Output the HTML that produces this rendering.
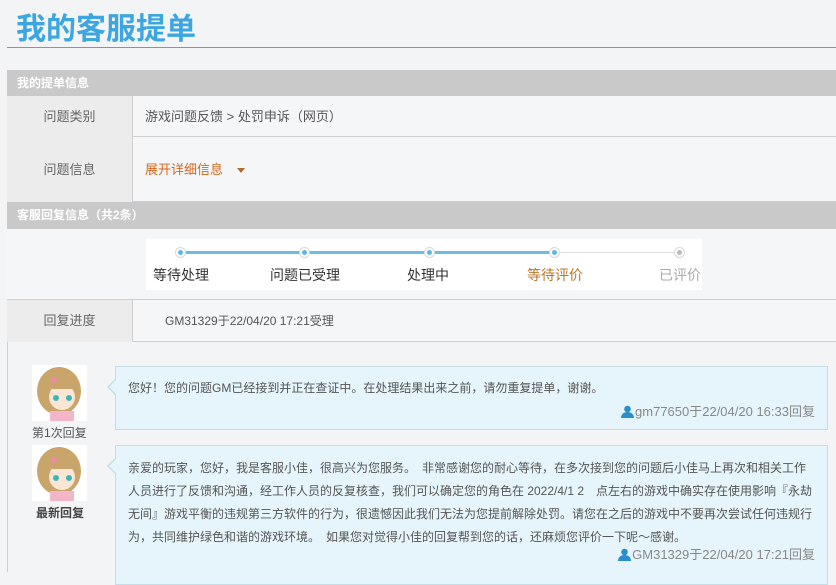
<!DOCTYPE html>
<html><head><meta charset="utf-8"><style>
*{margin:0;padding:0;box-sizing:border-box}
body{width:836px;height:572px;overflow:hidden;background:#f3f4f6;font-family:"Liberation Sans","Noto Sans CJK SC",sans-serif;position:relative;color:#555}
.abs{position:absolute}
h1{position:absolute;left:16px;top:4px;font-size:30px;color:#3da6e0;font-weight:bold;font-family:"Noto Sans CJK SC",sans-serif}
.line{left:7px;right:0;top:47px;height:1px;background:#4aa8dc}
.bar{left:7px;right:0;background:#c9c9c9;color:#fff;font-size:12px;font-weight:bold;padding-left:10px}
.lab{left:7px;width:126px;background:#ececec;border-right:1px solid #cfcfcf;text-align:center;font-size:13px;color:#666}
.row{left:7px;right:0;border-bottom:1px solid #cfcfcf;background:#f5f6f7}
.bub{left:115px;right:8px;border:1px solid #c6dde8;background:#e6f5fb}
.bub:before{content:"";position:absolute;left:-9px;top:12px;border:8px solid transparent;border-right-color:#c6dde8;border-left:0}
.bub:after{content:"";position:absolute;left:-7px;top:13px;border:7px solid transparent;border-right-color:#e6f5fb;border-left:0}
.av{left:32px;width:55px;height:56px;background:#fff}
.sig{right:12px;font-size:13px;color:#888}
.sig svg{vertical-align:-2px;margin-right:1px}
.st{font-size:14px;color:#333;top:265px}
.dot{width:11px;height:11px;border-radius:50%;background:#fff;border:1px solid #d8d8d8;top:247px}
.dot i{position:absolute;left:2px;top:2px;width:5px;height:5px;border-radius:50%;background:#5bb7ea}
</style></head><body>
<h1>我的客服提单</h1>
<div class="abs line"></div>
<div class="abs" style="left:7px;top:70px;width:1px;height:502px;background:#cfcfcf"></div>
<div class="abs bar" style="top:70px;height:26px;line-height:26px">我的提单信息</div>
<div class="abs row" style="top:96px;height:41px"></div>
<div class="abs lab" style="top:96px;height:41px;line-height:41px">问题类别</div>
<div class="abs" style="left:145px;top:96px;line-height:41px;font-size:13px;color:#555">游戏问题反馈 &gt; 处罚申诉（网页）</div>
<div class="abs row" style="top:137px;height:65px"></div>
<div class="abs lab" style="top:137px;height:65px;line-height:65px">问题信息</div>
<div class="abs" style="left:145px;top:137px;line-height:65px;font-size:13px;color:#d5671e">展开详细信息</div>
<div class="abs" style="left:237px;top:168px;border:4px solid transparent;border-top:5px solid #b96a2a"></div>
<div class="abs bar" style="top:202px;height:27px;line-height:27px">客服回复信息（共2条）</div>
<div class="abs" style="left:7px;right:0;top:229px;height:71px;background:#f5f6f7;border-bottom:1px solid #cfcfcf"></div>
<div class="abs" style="left:146px;top:239px;width:556px;height:51px;background:#fff"></div>
<div class="abs" style="left:180px;top:251px;width:375px;height:3px;background:#6bbde8"></div>
<div class="abs" style="left:555px;top:252px;width:125px;height:1px;background:#ddd"></div>
<div class="abs dot" style="left:175px"><i></i></div>
<div class="abs dot" style="left:299px"><i></i></div>
<div class="abs dot" style="left:424px"><i></i></div>
<div class="abs dot" style="left:549px"><i></i></div>
<div class="abs dot" style="left:674px"><i style="background:#bbb"></i></div>
<div class="abs st" style="left:153px">等待处理</div>
<div class="abs st" style="left:270px">问题已受理</div>
<div class="abs st" style="left:407px">处理中</div>
<div class="abs st" style="left:527px;color:#b7772b">等待评价</div>
<div class="abs st" style="left:659px;color:#aaa">已评价</div>
<div class="abs row" style="top:300px;height:42px"></div>
<div class="abs lab" style="top:300px;height:42px;line-height:42px">回复进度</div>
<div class="abs" style="left:165px;top:300px;line-height:42px;font-size:12px;color:#555">GM31329于22/04/20 17:21受理</div>
<svg class="abs av" style="top:365px" viewBox="0 0 55 56"><ellipse cx="27" cy="26" rx="22" ry="24" fill="#c9a56c"/><ellipse cx="30" cy="32" rx="13" ry="13" fill="#fbe6d6"/><path d="M15 14h30v10H15z" fill="#c9a56c"/><circle cx="24" cy="33" r="3" fill="#3bb9b0"/><circle cx="37" cy="33" r="3" fill="#3bb9b0"/><rect x="18" y="46" width="24" height="10" fill="#f2b6c8"/><circle cx="22" cy="15" r="3" fill="#f08aa8"/></svg>
<div class="abs" style="left:32px;top:424px;font-size:12px;color:#555">第1次回复</div>
<svg class="abs av" style="top:445px" viewBox="0 0 55 56"><ellipse cx="27" cy="26" rx="22" ry="24" fill="#c9a56c"/><ellipse cx="30" cy="32" rx="13" ry="13" fill="#fbe6d6"/><path d="M15 14h30v10H15z" fill="#c9a56c"/><circle cx="24" cy="33" r="3" fill="#3bb9b0"/><circle cx="37" cy="33" r="3" fill="#3bb9b0"/><rect x="18" y="46" width="24" height="10" fill="#f2b6c8"/><circle cx="22" cy="15" r="3" fill="#f08aa8"/></svg>
<div class="abs" style="left:36px;top:504px;font-size:12px;color:#444;font-weight:bold">最新回复</div>
<div class="abs bub" style="top:366px;height:64px">
<div style="position:absolute;left:12px;top:12px;font-size:12px;color:#555">您好！您的问题GM已经接到并正在查证中。在处理结果出来之前，请勿重复提单，谢谢。</div>
<div class="abs sig" style="top:34px"><svg width="13" height="13" viewBox="0 0 13 13"><circle cx="6.5" cy="4" r="3.3" fill="#2a8fc8"/><path d="M0 13c0-4 3-6 6.5-6s6.5 2 6.5 6z" fill="#2a8fc8"/></svg>gm77650于22/04/20 16:33回复</div></div>
<div class="abs bub" style="top:445px;height:140px">
<div style="position:absolute;left:12px;top:11px;white-space:nowrap;font-size:12px;line-height:23px;color:#555">亲爱的玩家，您好，我是客服小佳，很高兴为您服务。　非常感谢您的耐心等待，在多次接到您的问题后小佳马上再次和相关工作<br>人员进行了反馈和沟通，经工作人员的反复核查，我们可以确定您的角色在 2022/4/1 2　点左右的游戏中确实存在使用影响『永劫<br>无间』游戏平衡的违规第三方软件的行为，很遗憾因此我们无法为您提前解除处罚。请您在之后的游戏中不要再次尝试任何违规行<br>为，共同维护绿色和谐的游戏环境。　如果您对觉得小佳的回复帮到您的话，还麻烦您评价一下呢～感谢。</div>
<div class="abs sig" style="top:98px"><svg width="13" height="13" viewBox="0 0 13 13"><circle cx="6.5" cy="4" r="3.3" fill="#2a8fc8"/><path d="M0 13c0-4 3-6 6.5-6s6.5 2 6.5 6z" fill="#2a8fc8"/></svg>GM31329于22/04/20 17:21回复</div></div>
</body></html>
